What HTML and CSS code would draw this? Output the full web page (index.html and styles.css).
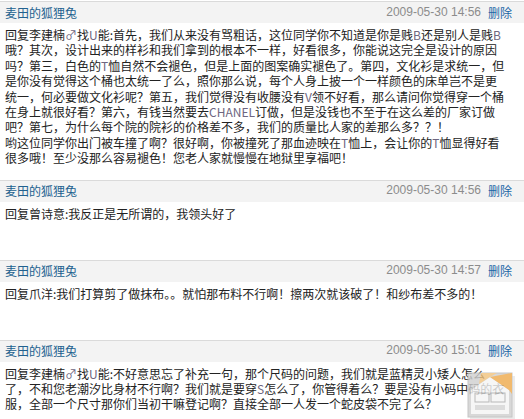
FILE: index.html
```html
<!DOCTYPE html>
<html>

<head>
    <title>留言</title>
    <link rel="stylesheet" href="styles.css">
</head>

<body>
    <div class="list">
        <div class="item">
            <div class="item-head">
                <a class="name">麦田的狐狸兔</a>
                <span class="meta"><span class="date">2009-05-30 14:56</span><a class="del">删除</a></span>
            </div>
            <div class="item-body">
                回复李建楠<span class="en">♂</span>找<span class="en">U</span>能:首先，我们从来没有骂粗话，这位同学你不知道是你是贱<span class="en">B</span>还是别人是贱<span class="en">B</span><br>
                哦？其次，设计出来的样衫和我们拿到的根本不一样，好看很多，你能说这完全是设计的原因<br>
                吗？第三，白色的<span class="en">T</span>恤自然不会褪色，但是上面的图案确实褪色了。第四，文化衫是求统一，但<br>
                是你没有觉得这个桶也太统一了么，照你那么说，每个人身上披一个一样颜色的床单岂不是更<br>
                统一，何必要做文化衫呢？第五，我们觉得没有收腰没有<span class="en">V</span>领不好看，那么请问你觉得穿一个桶<br>
                在身上就很好看？第六，有钱当然要去<span class="en">CHANEL</span>订做，但是没钱也不至于在这么差的厂家订做<br>
                吧？第七，为什么每个院的院衫的价格差不多，我们的质量比人家的差那么多？？！<br>
                哟这位同学你出门被车撞了啊？很好啊，你被撞死了那血迹映在<span class="en">T</span>恤上，会让你的<span class="en">T</span>恤显得好看<br>
                很多哦！至少没那么容易褪色！您老人家就慢慢在地狱里享福吧！
            </div>
        </div>

        <div class="item">
            <div class="item-head">
                <a class="name">麦田的狐狸兔</a>
                <span class="meta"><span class="date">2009-05-30 14:56</span><a class="del">删除</a></span>
            </div>
            <div class="item-body">
                回复曾诗意:我反正是无所谓的，我领头好了
            </div>
        </div>

        <div class="item">
            <div class="item-head">
                <a class="name">麦田的狐狸兔</a>
                <span class="meta"><span class="date">2009-05-30 14:57</span><a class="del">删除</a></span>
            </div>
            <div class="item-body">
                回复爪洋:我们打算剪了做抹布。。就怕那布料不行啊！擦两次就该破了！和纱布差不多的！
            </div>
        </div>

        <div class="item">
            <div class="item-head">
                <a class="name">麦田的狐狸兔</a>
                <span class="meta"><span class="date">2009-05-30 15:01</span><a class="del">删除</a></span>
            </div>
            <div class="item-body">
                回复李建楠<span class="en">♂</span>找<span class="en">U</span>能:不好意思忘了补充一句，那个尺码的问题，我们就是蓝精灵小矮人怎么<br>
                了，不和您老潮汐比身材不行啊？我们就是要穿<span class="en">S</span>怎么了，你管得着么？要是没有小码中码的衣<br>
                服，全部一个尺寸那你们当初干嘛登记啊？直接全部一人发一个蛇皮袋不完了么？
            </div>
        </div>
    </div>

    <!-- site watermark -->
    <svg class="mark" width="50" height="48" viewBox="0 0 50 48">
        <rect x="3" y="4" width="45" height="44" fill="#d0d0d0" opacity="0.5" />
        <rect x="1" y="1" width="44" height="44" fill="#cfcfcf" stroke="#b8b8b8" />
        <polygon points="4,18 23,5 42,18 42,42 4,42" fill="#f4f4f4" />
        <polygon points="23,5 45,1 45,22 42,18" fill="#eea94a" />
        <polygon points="14,1 30,1 23,5 12,12" fill="#f1c27c" />
        <rect x="8" y="21" width="14" height="9" fill="none" stroke="#a8a8a8" />
        <rect x="24" y="21" width="14" height="9" fill="none" stroke="#a8a8a8" />
        <rect x="8" y="33" width="30" height="5" fill="#d4d4d4" />
    </svg>
</body>

</html>
```

FILE: styles.css
```css
body {
    margin: 0;
    background-color: #fff;
    color: #222;
    font-family: "Noto Sans CJK SC", "Liberation Sans", sans-serif;
    font-size: 12px;
    line-height: 15.4px;
}

.list {
    padding-top: 1px;
}

.item-head {
    display: flex;
    justify-content: space-between;
    align-items: center;
    height: 21px;
    padding: 0 12px 0 5px;
    border-top: 1px solid #dadada;
    background-color: #f3f3f3;
}

.name {
    color: #22618f;
}

.meta {
    display: flex;
    align-items: center;
}

.date {
    color: #8c8c8c;
    font-family: "Liberation Sans", sans-serif;
    margin-right: 7px;
}

.del {
    color: #1b66a6;
}

.item-body {
    min-height: 40px;
    padding: 4px 5px 14px;
}

.en {
    color: #6e6680;
}

.mark {
    position: absolute;
    left: 467px;
    top: 372px;
    opacity: 0.8;
}
```
